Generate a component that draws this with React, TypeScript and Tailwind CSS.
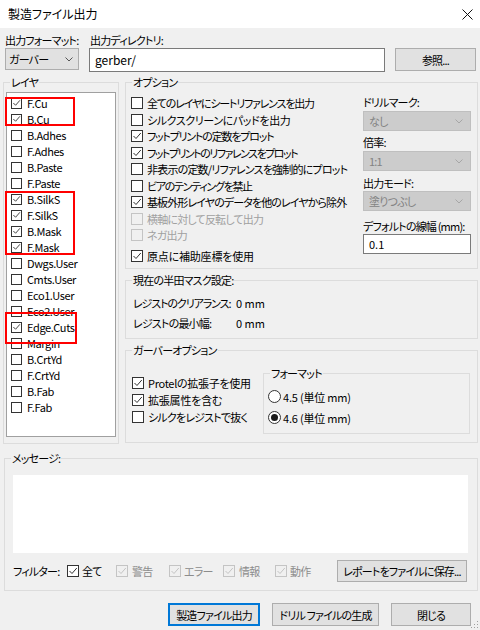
import React from 'react';

type CheckProps = { checked?: boolean; disabled?: boolean; small?: boolean };

function Check({ checked, disabled, small }: CheckProps) {
  const size = small ? 'w-[11px] h-[11px]' : 'w-[12px] h-[12px]';
  const box = disabled ? 'border-[#c4c4c4] bg-[#f0f0f0]' : 'border-[#333333] bg-white';
  const stroke = disabled ? '#c4c4c4' : '#333333';
  return (
    <span className={`flex shrink-0 items-center justify-center border ${size} ${box}`}>
      {checked && (
        <svg width="10" height="10" viewBox="0 0 10 10">
          <path d="M1.5 5L4 7.5L8.8 2" fill="none" stroke={stroke} strokeWidth="1" />
        </svg>
      )}
    </span>
  );
}

function Radio({ checked }: { checked?: boolean }) {
  return (
    <span className="flex h-[13px] w-[13px] shrink-0 items-center justify-center rounded-full border border-[#333333] bg-white">
      {checked && <span className="h-[7px] w-[7px] rounded-full bg-[#1a1a1a]" />}
    </span>
  );
}

function Chevron({ c }: { c: string }) {
  return (
    <svg width="8" height="5" viewBox="0 0 8 5">
      <path d="M0.5 0.5L4 4L7.5 0.5" fill="none" stroke={c} strokeWidth="1" />
    </svg>
  );
}

function DisabledSelect({ text }: { text: string }) {
  return (
    <div className="flex h-[20px] w-[108px] items-center justify-between border border-[#bfbfbf] bg-[#cccccc] pl-[5px] pr-[7px] text-[#838383]">
      <span>{text}</span>
      <Chevron c="#a6a6a6" />
    </div>
  );
}

const layers: [string, boolean][] = [
  ['F.Cu', true],
  ['B.Cu', true],
  ['B.Adhes', false],
  ['F.Adhes', false],
  ['B.Paste', false],
  ['F.Paste', false],
  ['B.SilkS', true],
  ['F.SilkS', true],
  ['B.Mask', true],
  ['F.Mask', true],
  ['Dwgs.User', false],
  ['Cmts.User', false],
  ['Eco1.User', false],
  ['Eco2.User', false],
  ['Edge.Cuts', true],
  ['Margin', false],
  ['B.CrtYd', false],
  ['F.CrtYd', false],
  ['B.Fab', false],
  ['F.Fab', false],
];

const options: [string, boolean, boolean, string][] = [
  ['全てのレイヤにシートリファレンスを出力', false, false, 'tracking-[-1.2px]'],
  ['シルクスクリーンにパッドを出力', false, false, 'tracking-[-0.4px]'],
  ['フットプリントの定数をプロット', true, false, 'tracking-[-1.2px]'],
  ['フットプリントのリファレンスをプロット', true, false, 'tracking-[-1.5px]'],
  ['非表示の定数/リファレンスを強制的にプロット', false, false, 'tracking-[-0.8px]'],
  ['ビアのテンティングを禁止', false, false, 'tracking-[-1.3px]'],
  ['基板外形レイヤのデータを他のレイヤから除外', true, false, 'tracking-[-0.9px]'],
  ['横軸に対して反転して出力', false, true, 'tracking-[-0.8px]'],
  ['ネガ出力', false, true, 'tracking-[-0.8px]'],
];

const legend = 'ml-[6px] px-[1px] leading-[16px]';
const btn = 'flex items-center justify-center border border-[#adadad] bg-[#e1e1e1]';

export default function App() {
  return (
    <div className="relative h-[630px] w-[480px] overflow-hidden whitespace-nowrap bg-[#f0f0f0] font-['Noto_Sans_CJK_JP','Noto_Sans',sans-serif] text-[11px] leading-[16px] tracking-[-0.8px] text-black [font-feature-settings:'palt']">
      {/* Title bar */}
      <div className="flex h-[28px] items-center justify-between bg-white pl-[8px] pr-[7px]">
        <span className="text-[12px] tracking-normal">製造ファイル出力</span>
        <svg width="11" height="11" viewBox="0 0 11 11">
          <path d="M0.5 0.5L10.5 10.5M10.5 0.5L0.5 10.5" stroke="#111111" strokeWidth="1" />
        </svg>
      </div>

      {/* Format / directory row */}
      <div className="mt-[4px] flex h-[40px]">
        <div className="ml-[5px] w-[74px]">
          <div>出力フォーマット:</div>
          <div className="flex h-[22px] items-center justify-between border border-[#adadad] bg-[#e1e1e1] pl-[3px] pr-[5px]">
            <span>ガーバー</span>
            <Chevron c="#555555" />
          </div>
        </div>
        <div className="ml-[10px] w-[296px]">
          <div className="pl-[1px]">出力ディレクトリ:</div>
          <div className="flex h-[24px] items-center border border-[#7a7a7a] bg-white pl-[5px] text-[12px] tracking-normal">gerber/</div>
        </div>
        <div className={`${btn} ml-[10px] mt-[16px] h-[23px] w-[81px]`}>参照...</div>
      </div>

      {/* Main row */}
      <div className="mt-[2px] flex">
        {/* Layers */}
        <fieldset className="ml-[3px] h-[370px] w-[116px] border border-[#dcdcdc]">
          <legend className={legend}>レイヤ</legend>
          <div className="ml-[2px] mt-[2px] h-[345px] w-[110px] border border-[#a0a0a0] bg-white pl-[4px] pt-[2px] tracking-[-0.4px]">
            {layers.map(([name, on]) => (
              <div key={name} className="flex h-[16px] items-center gap-[5px]">
                <Check checked={on} small />
                <span>{name}</span>
              </div>
            ))}
          </div>
        </fieldset>

        {/* Right column */}
        <div className="ml-[6px] flex w-[353px] flex-col">
          <fieldset className="h-[195px] border border-[#dcdcdc]">
            <legend className={legend}>オプション</legend>
            <div className="flex">
              <div className="w-[237px] pl-[5px] pt-[5px]">
                {options.map(([t, on, dis, tr]) => (
                  <div key={t} className="flex h-[16.5px] items-center gap-[4px]">
                    <Check checked={on} disabled={dis} />
                    <span className={`${tr} ${dis ? 'text-[#a0a0a0]' : ''}`}>{t}</span>
                  </div>
                ))}
                <div className="mt-[4px] flex h-[16.5px] items-center gap-[4px]">
                  <Check checked />
                  <span className="tracking-[-0.2px]">原点に補助座標を使用</span>
                </div>
              </div>
              <div className="flex flex-col pt-[4px]">
                <div>ドリルマーク:</div>
                <div className="mt-[1px]">
                  <DisabledSelect text="なし" />
                </div>
                <div className="mt-[3px]">倍率:</div>
                <div className="mt-[1px]">
                  <DisabledSelect text="1:1" />
                </div>
                <div className="mt-[4px]">出力モード:</div>
                <div>
                  <DisabledSelect text="塗りつぶし" />
                </div>
                <div className="mt-[7px]">デフォルトの線幅 (mm):</div>
                <div className="flex h-[20px] w-[108px] items-center border border-[#7a7a7a] bg-white pl-[5px] tracking-normal">0.1</div>
              </div>
            </div>
          </fieldset>

          <fieldset className="mt-[3px] h-[67px] border border-[#dcdcdc]">
            <legend className={legend}>現在の半田マスク設定:</legend>
            <div className="mt-[5px] pl-[7px]">
              <div className="flex h-[20px] items-center">
                <span className="w-[103px] tracking-[-1.1px]">レジストのクリアランス:</span>
                <span className="tracking-normal">0 mm</span>
              </div>
              <div className="flex h-[20px] items-center">
                <span className="w-[103px]">レジストの最小幅:</span>
                <span className="tracking-normal">0 mm</span>
              </div>
            </div>
          </fieldset>

          <fieldset className="mt-[3px] h-[101px] border border-[#dcdcdc]">
            <legend className={legend}>ガーバーオプション</legend>
            <div className="flex">
              <div className="w-[137px] pl-[6px] pt-[16px]">
                <div className="flex h-[17px] items-center gap-[4px]">
                  <Check checked />
                  <span className="tracking-[-0.3px]">Protelの拡張子を使用</span>
                </div>
                <div className="flex h-[17px] items-center gap-[4px]">
                  <Check checked />
                  <span className="tracking-[-0.2px]">拡張属性を含む</span>
                </div>
                <div className="flex h-[17px] items-center gap-[4px]">
                  <Check />
                  <span>シルクをレジストで抜く</span>
                </div>
              </div>
              <fieldset className="mt-[7px] h-[69px] w-[207px] border border-[#dcdcdc]">
                <legend className={legend}>フォーマット</legend>
                <div className="mt-[5px] pl-[4px] tracking-[-0.2px]">
                  <div className="flex h-[21px] items-center gap-[2px]">
                    <Radio />
                    <span>4.5 (単位 mm)</span>
                  </div>
                  <div className="flex h-[21px] items-center gap-[2px]">
                    <Radio checked />
                    <span>4.6 (単位 mm)</span>
                  </div>
                </div>
              </fieldset>
            </div>
          </fieldset>
        </div>
      </div>

      {/* Messages */}
      <fieldset className="ml-[4px] mt-[6px] h-[141px] w-[474px] border border-[#dcdcdc]">
        <legend className={legend}>メッセージ:</legend>
        <div className="ml-[8px] mt-[9px] h-[78px] w-[455px] bg-white" />
        <div className="mt-[7px] flex h-[22px] items-center pl-[8px]">
          <span className="w-[54px]">フィルター:</span>
          <div className="flex w-[49px] items-center gap-[3px]">
            <span className="flex h-[12px] w-[12px] items-center justify-center border-[1.5px] border-[#333333] bg-white">
              <svg width="10" height="10" viewBox="0 0 10 10">
                <path d="M1.5 5L4 7.5L8.8 2" fill="none" stroke="#333333" strokeWidth="1" />
              </svg>
            </span>
            <span>全て</span>
          </div>
          <div className="flex w-[53px] items-center gap-[4px] text-[#8c8c8c]">
            <Check checked disabled />
            <span>警告</span>
          </div>
          <div className="flex w-[54px] items-center gap-[3px] text-[#8c8c8c]">
            <Check checked disabled />
            <span>エラー</span>
          </div>
          <div className="flex w-[52px] items-center gap-[4px] text-[#8c8c8c]">
            <Check checked disabled />
            <span>情報</span>
          </div>
          <div className="flex w-[62px] items-center gap-[3px] text-[#8c8c8c]">
            <Check checked disabled />
            <span>動作</span>
          </div>
          <div className={`${btn} h-[22px] w-[130px]`}>レポートをファイルに保存...</div>
        </div>
      </fieldset>

      {/* Bottom buttons */}
      <div className="mt-[12px] flex justify-end gap-[12px] pr-[9px]">
        <div className="flex h-[23px] w-[92px] items-center justify-center border-2 border-[#0078d7] bg-[#e1e1e1]">製造ファイル出力</div>
        <div className={`${btn} h-[23px] w-[107px]`}>ドリル ファイルの生成</div>
        <div className={`${btn} h-[23px] w-[80px]`}>閉じる</div>
      </div>

      {/* Resize grip */}
      <svg className="absolute bottom-[1px] right-[1px]" width="9" height="9" viewBox="0 0 9 9">
        <rect x="7" y="1" width="1" height="1" fill="#a0a0a0" />
        <rect x="4" y="4" width="1" height="1" fill="#a0a0a0" />
        <rect x="7" y="4" width="1" height="1" fill="#a0a0a0" />
        <rect x="1" y="7" width="1" height="1" fill="#a0a0a0" />
        <rect x="4" y="7" width="1" height="1" fill="#a0a0a0" />
        <rect x="7" y="7" width="1" height="1" fill="#a0a0a0" />
      </svg>

      {/* Red highlight rectangles */}
      <div className="pointer-events-none absolute left-[5px] top-[97px] h-[29px] w-[70px] border-2 border-[#ff0000]" />
      <div className="pointer-events-none absolute left-[5px] top-[191px] h-[64px] w-[70px] border-2 border-[#ff0000]" />
      <div className="pointer-events-none absolute left-[5px] top-[312px] h-[32px] w-[72px] border-2 border-[#ff0000]" />
    </div>
  );
}
